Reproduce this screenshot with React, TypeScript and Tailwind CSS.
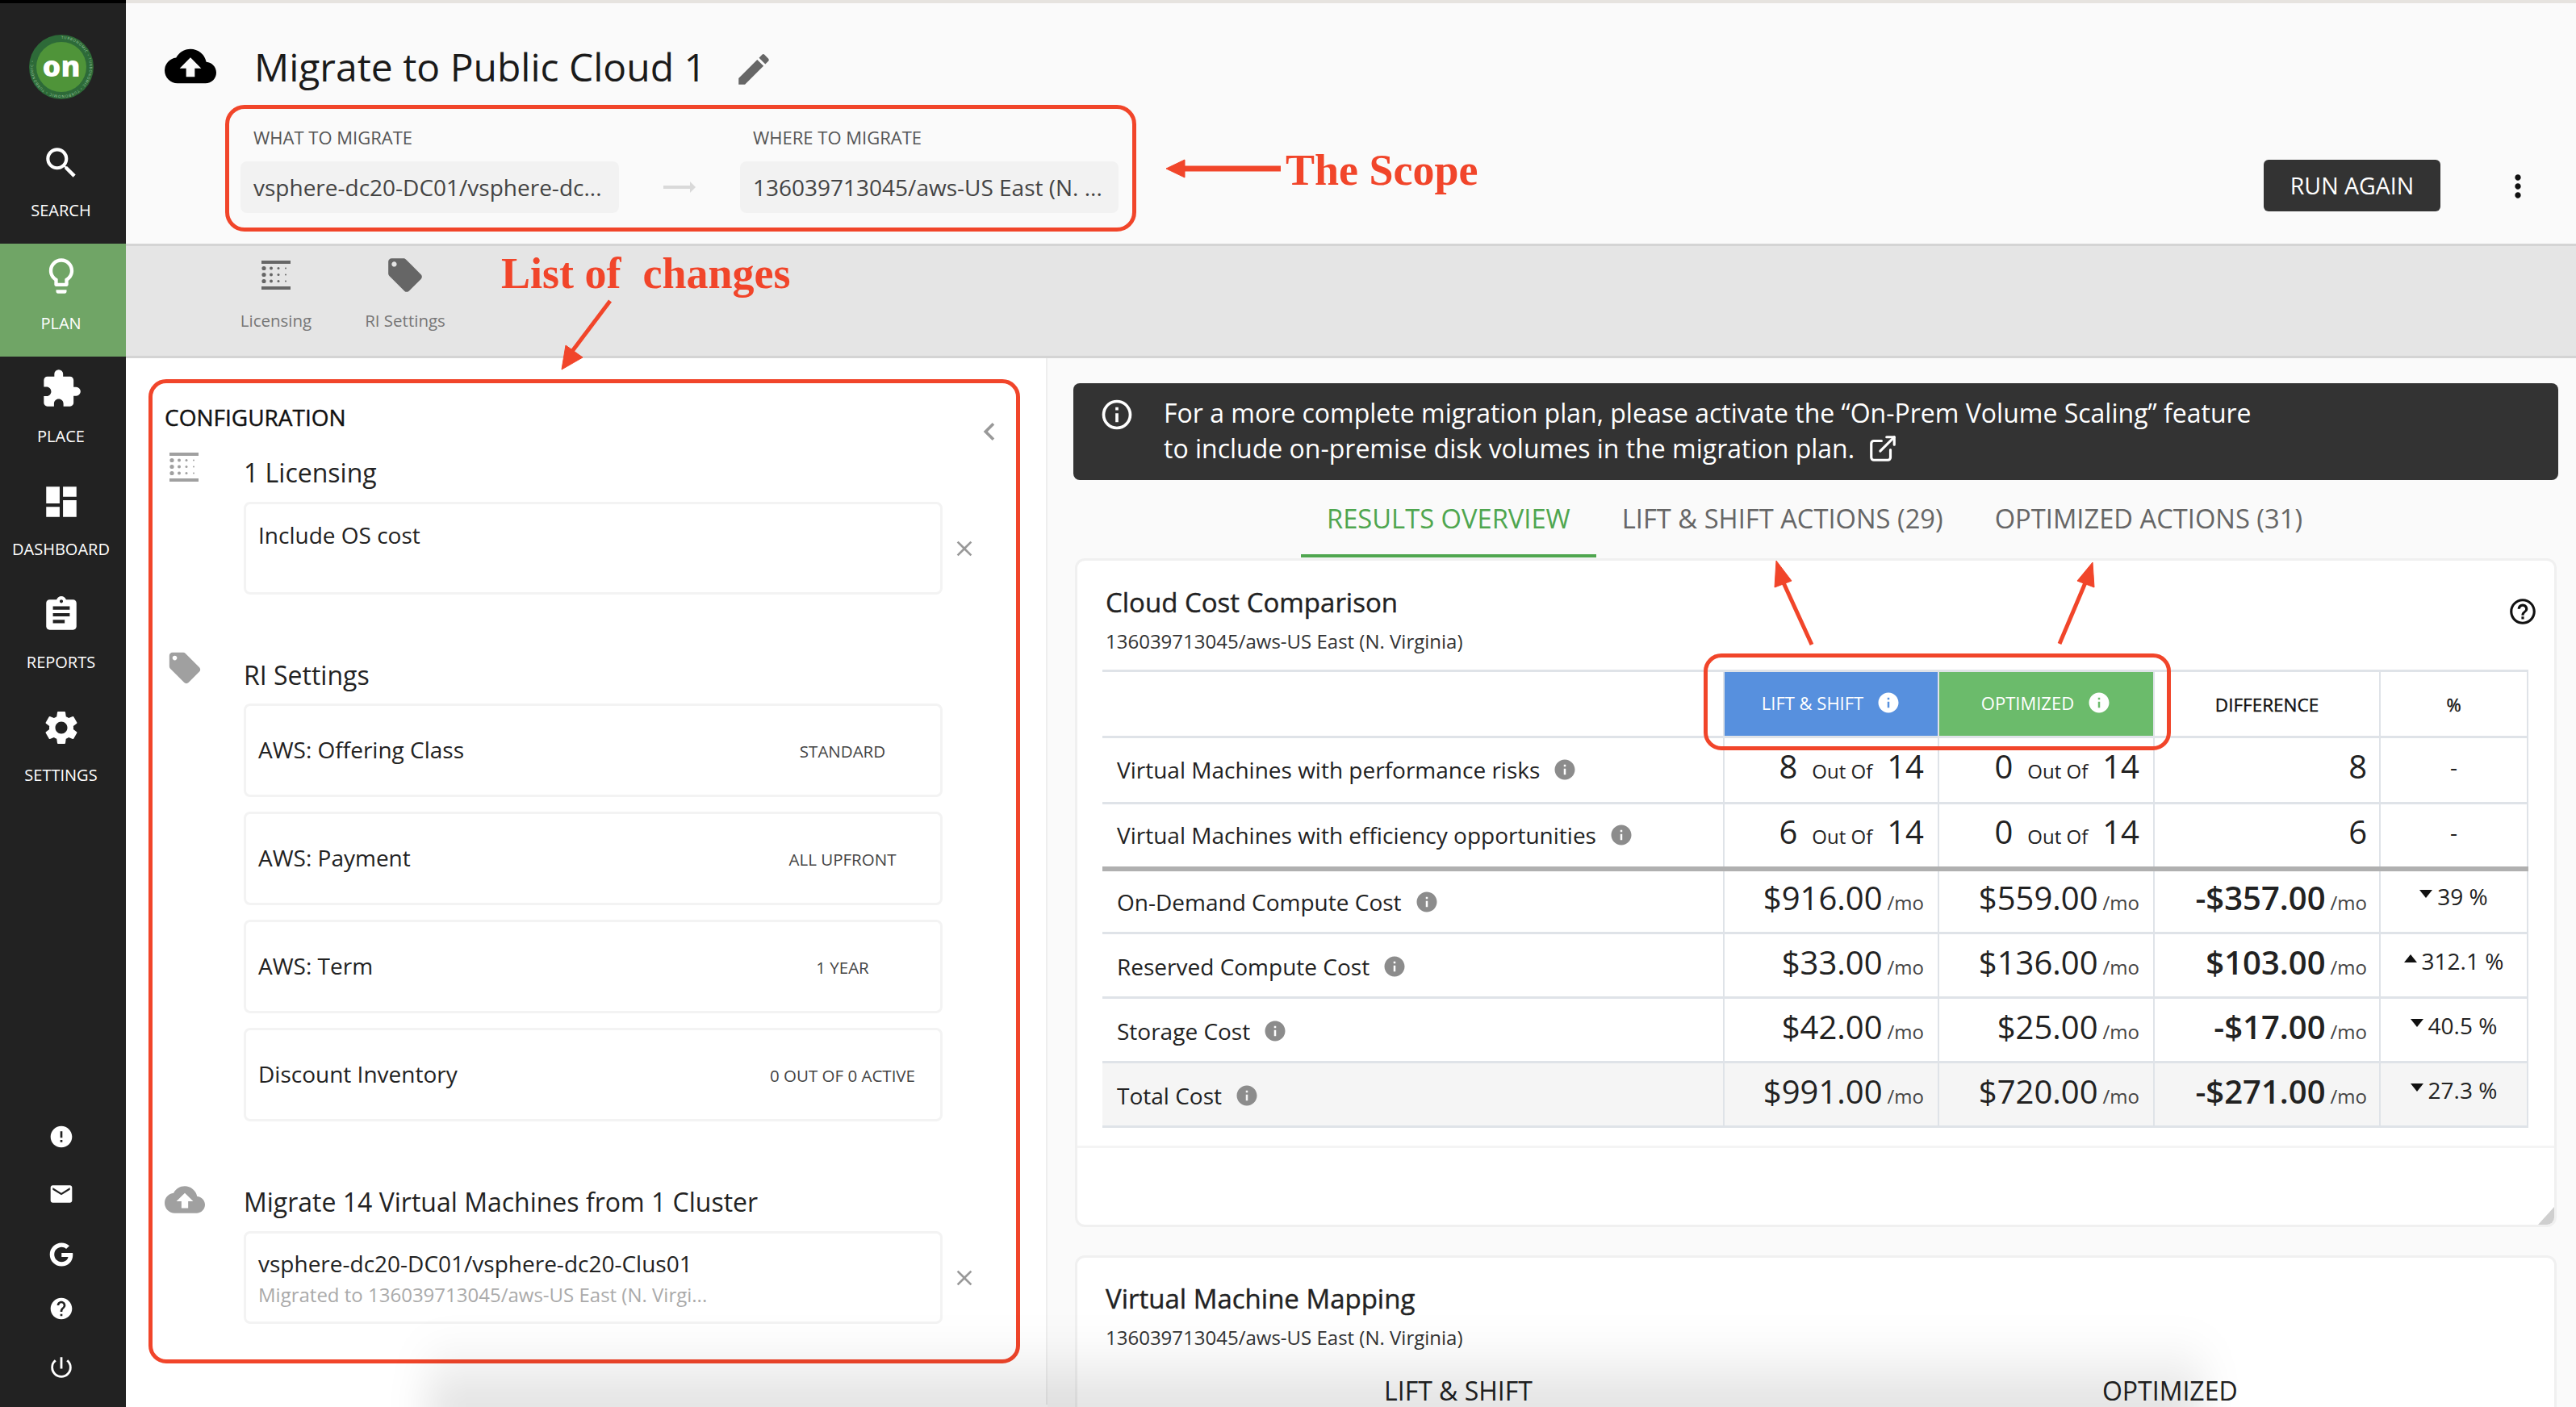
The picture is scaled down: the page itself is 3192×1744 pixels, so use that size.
import type { ReactNode } from "react";
import {
  MdAssignment,
  MdChevronLeft,
  MdClose,
  MdCloudUpload,
  MdDashboard,
  MdEdit,
  MdEmail,
  MdError,
  MdExtension,
  MdHelp,
  MdHelpOutline,
  MdInfo,
  MdInfoOutline,
  MdLightbulbOutline,
  MdLocalOffer,
  MdMoreVert,
  MdPowerSettingsNew,
  MdSearch,
  MdSettings,
} from "react-icons/md";
import { FaGoogle } from "react-icons/fa";
import { FiExternalLink } from "react-icons/fi";

const navItems = [
  { label: "SEARCH", icon: <MdSearch className="text-[50px]" /> },
  { label: "PLAN", icon: <MdLightbulbOutline className="text-[52px]" />, active: true },
  { label: "PLACE", icon: <MdExtension className="text-[52px]" /> },
  { label: "DASHBOARD", icon: <MdDashboard className="text-[50px]" /> },
  { label: "REPORTS", icon: <MdAssignment className="text-[50px]" /> },
  { label: "SETTINGS", icon: <MdSettings className="text-[50px]" /> },
];

const costRows = [
  ["On-Demand Compute Cost", "$916.00", "$559.00", "-$357.00", "39 %", "down"],
  ["Reserved Compute Cost", "$33.00", "$136.00", "$103.00", "312.1 %", "up"],
  ["Storage Cost", "$42.00", "$25.00", "-$17.00", "40.5 %", "down"],
  ["Total Cost", "$991.00", "$720.00", "-$271.00", "27.3 %", "down"],
];

const riRows = [
  ["AWS: Offering Class", "STANDARD"],
  ["AWS: Payment", "ALL UPFRONT"],
  ["AWS: Term", "1 YEAR"],
  ["Discount Inventory", "0 OUT OF 0 ACTIVE"],
];

const LicensingIcon = ({ className }: { className: string }) => (
  <svg viewBox="0 0 36 36" className={className} fill="currentColor">
    <rect x="0" y="0" width="36" height="4" />
    <rect x="0" y="32" width="36" height="4" />
    {[10, 18, 26].map((y) => (
      <g key={y}>
        <circle cx="3" cy={y - 0.5} r="2.6" />
        <circle cx="12" cy={y - 0.5} r="2" />
        <circle cx="21" cy={y - 0.5} r="1.5" />
        <circle cx="30" cy={y - 0.5} r="1" />
      </g>
    ))}
  </svg>
);

const Logo = () => (
  <svg viewBox="0 0 80 80" className="h-[80px] w-[80px]">
    <circle cx="40" cy="40" r="40" fill="#2d6a38" />
    <circle cx="40" cy="40" r="31" fill="#4f9439" />
    <defs>
      <path id="ring" d="M40 5a35 35 0 1 1-0.01 0" />
    </defs>
    <text fontSize="4.4" fill="#9fc9a2" fontFamily="'Open Sans', sans-serif" letterSpacing="0.8">
      <textPath href="#ring">TURBONOMIC • TURBONOMIC • TURBONOMIC • TURBONOMIC •</textPath>
    </text>
    <text x="40" y="52" textAnchor="middle" fontSize="36" fontWeight="800" fill="#fff" fontFamily="'Open Sans', sans-serif">
      on
    </text>
  </svg>
);

const Sidebar = () => (
  <div className="flex h-[1740px] w-[156px] shrink-0 flex-col bg-[#222222] text-white">
    <div className="flex h-[158px] items-center justify-center pr-[4px]">
      <Logo />
    </div>
    {navItems.map((item) => (
      <div
        key={item.label}
        className={`flex h-[140px] flex-col items-center pr-[5px] pt-[12px] ${item.active ? "bg-[#70a566]" : ""}`}
      >
        <div className="flex h-[56px] items-center">{item.icon}</div>
        <div className="mt-[19px] text-[20px] leading-[24px]">{item.label}</div>
      </div>
    ))}
    <div className="mt-auto flex flex-col items-center pb-[32px] pr-[4px]">
      <MdError className="text-[32px]" />
      <MdEmail className="mt-[39px] text-[32px]" />
      <FaGoogle className="mt-[44px] text-[30px]" />
      <MdHelp className="mt-[36px] text-[32px]" />
      <MdPowerSettingsNew className="mt-[40px] text-[34px]" />
    </div>
  </div>
);

const ScopeField = ({ label, value }: { label: string; value: string }) => (
  <div className="w-[469px]">
    <div className="pl-[16px] text-[22px] leading-[24px] text-[#555555]">{label}</div>
    <div className="mt-[18px] flex h-[64px] items-center rounded-[8px] bg-[#f2f2f2] px-[16px] text-[28px] whitespace-nowrap text-[#444444]">
      {value}
    </div>
  </div>
);

const Header = () => (
  <div className="h-[301px] border-b-[3px] border-[#d4d4d4] bg-[#fafafa] pl-[48px] pr-[50px] pt-[48px]">
    <div className="flex h-[60px] items-center">
      <MdCloudUpload className="text-[64px] text-black" />
      <div className="ml-[47px] mt-[2px] text-[48px] leading-[60px] text-[#1a1a1a]">Migrate to Public Cloud 1</div>
      <MdEdit className="ml-[34px] mt-[8px] text-[50px] text-[#666666]" />
    </div>
    <div className="mt-[46px] flex items-end">
      <div className="ml-[94px] flex items-end">
        <ScopeField label="WHAT TO MIGRATE" value="vsphere-dc20-DC01/vsphere-dc..." />
        <div className="flex h-[64px] w-[150px] items-center justify-center text-[#d9d9d9]">
          <svg viewBox="0 0 40 16" className="h-[16px] w-[40px]" fill="currentColor">
            <rect x="0" y="6" width="34" height="4" />
            <path d="M33 1 40 8l-7 7z" />
          </svg>
        </div>
        <ScopeField label="WHERE TO MIGRATE" value="136039713045/aws-US East (N. ..." />
      </div>
      <div className="ml-auto flex items-center">
        <button className="mb-[2px] h-[64px] w-[219px] rounded-[6px] bg-[#333333] text-[28.5px] text-white">RUN AGAIN</button>
        <MdMoreVert className="ml-[74px] text-[44px] text-[#111111]" />
      </div>
    </div>
  </div>
);

const Toolbar = () => (
  <div className="flex h-[139px] border-b-[3px] border-[#d4d4d4] bg-[#e5e5e5] pl-[136px] pt-[12px] text-[#666666]">
    <div className="flex w-[100px] flex-col items-center">
      <div className="flex h-[48px] items-center">
        <LicensingIcon className="h-[36px] w-[36px]" />
      </div>
      <div className="mt-[17px] text-[20.5px] leading-[30px] text-[#777777]">Licensing</div>
    </div>
    <div className="ml-[60px] flex w-[100px] flex-col items-center">
      <div className="flex h-[48px] items-center">
        <MdLocalOffer className="text-[50px]" />
      </div>
      <div className="mt-[17px] whitespace-nowrap text-[20.5px] leading-[30px] text-[#777777]">RI Settings</div>
    </div>
  </div>
);

const SectionHead = ({ icon, title }: { icon: ReactNode; title: string }) => (
  <div className="flex h-[44px] items-start">
    <div className="flex w-[98px] justify-start text-[#a0a0a0]">{icon}</div>
    <div className="text-[32px] leading-[44px] text-[#222222]">{title}</div>
  </div>
);

const ConfigCard = ({ children, height }: { children: ReactNode; height: string }) => (
  <div className={`w-[866px] rounded-[8px] border-[3px] border-[#f3f3f3] bg-white px-[15px] ${height}`}>{children}</div>
);

const ConfigPanel = () => (
  <div className="h-[1297px] w-[1142px] shrink-0 border-r-[2px] border-[#eeeeee] bg-white pl-[48px] pt-[53px]">
    <div className="flex h-[40px] items-start pr-[48px]">
      <div className="text-[28px] leading-[40px] text-[#111111] [-webkit-text-stroke:0.4px_currentColor]">CONFIGURATION</div>
      <MdChevronLeft className="ml-auto mt-[16px] text-[44px] text-[#999999]" />
    </div>

    <div className="mt-[27px]">
      <SectionHead icon={<LicensingIcon className="ml-[6px] mt-[-3px] h-[36px] w-[36px]" />} title="1 Licensing" />
      <div className="ml-[98px] mt-[14px] flex items-center">
        <ConfigCard height="h-[115px]">
          <div className="pt-[20px] text-[28px] leading-[36px] text-[#222222]">Include OS cost</div>
        </ConfigCard>
        <MdClose className="ml-[11px] text-[32px] text-[#999999]" />
      </div>
    </div>

    <div className="mt-[78px]">
      <SectionHead icon={<MdLocalOffer className="ml-[2px] mt-[-10px] text-[46px]" />} title="RI Settings" />
      <div className="ml-[98px] mt-[13px] flex flex-col gap-[18px]">
        {riRows.map(([name, value]) => (
          <ConfigCard key={name} height="h-[116px]">
            <div className="flex h-full items-center pb-[2px]">
              <div className="text-[28px] text-[#222222]">{name}</div>
              <div className="ml-auto flex w-[212px] justify-center whitespace-nowrap pt-[4px] text-[20.5px] text-[#444444]">{value}</div>
            </div>
          </ConfigCard>
        ))}
      </div>
    </div>

    <div className="mt-[78px]">
      <SectionHead icon={<MdCloudUpload className="mt-[-6px] text-[50px]" />} title="Migrate 14 Virtual Machines from 1 Cluster" />
      <div className="ml-[98px] mt-[14px] flex items-center">
        <ConfigCard height="h-[115px]">
          <div className="pt-[19px] text-[28px] leading-[36px] text-[#222222]">vsphere-dc20-DC01/vsphere-dc20-Clus01</div>
          <div className="mt-[5px] text-[24px] leading-[32px] text-[#aaaaaa]">Migrated to 136039713045/aws-US East (N. Virgi...</div>
        </ConfigCard>
        <MdClose className="ml-[11px] text-[32px] text-[#999999]" />
      </div>
    </div>
  </div>
);

const InfoDot = () => <MdInfo className="ml-[16px] inline-block align-[-4px] text-[30px] text-[#8c8c8c]" />;

const OutOf = ({ n }: { n: string }) => (
  <>
    <span className="text-[40px]">{n}</span>
    <span className="mx-[18px] text-[24px]">Out Of</span>
    <span className="text-[40px]">14</span>
  </>
);

const Price = ({ value, bold }: { value: string; bold?: boolean }) => (
  <>
    <span className={`text-[40px] ${bold ? "font-semibold" : ""}`}>{value}</span>
    <span className="ml-[6px] text-[24px] text-[#444444]">/mo</span>
  </>
);

const Caret = ({ dir }: { dir: string }) => (
  <svg viewBox="0 0 16 10" className="mr-[6px] mb-[6px] h-[10px] w-[16px]" fill="#111111">
    <path d={dir === "up" ? "M8 0 16 10H0z" : "M0 0h16L8 10z"} />
  </svg>
);

const CostTable = () => (
  <table className="w-[1766px] table-fixed border-collapse text-[#222222]">
    <colgroup>
      <col className="w-[770px]" />
      <col className="w-[266px]" />
      <col className="w-[267px]" />
      <col className="w-[280px]" />
      <col className="w-[183px]" />
    </colgroup>
    <tbody>
      <tr className="h-[82px] border-y-[3px] border-[#dfe3e8]">
        <td />
        <td className="border-x-[2px] border-[#dfe3e8] bg-[#5790de] pb-[2px] text-center text-[22px] text-white">
          LIFT & SHIFT
          <MdInfo className="ml-[16px] inline-block align-[-6px] text-[30px]" />
        </td>
        <td className="border-x-[2px] border-[#dfe3e8] bg-[#6bbb6b] pb-[2px] text-center text-[22px] text-white">
          OPTIMIZED
          <MdInfo className="ml-[16px] inline-block align-[-6px] text-[30px]" />
        </td>
        <td className="border-x-[2px] border-[#dfe3e8] pt-[2px] text-center text-[22.5px] text-[#111111] [-webkit-text-stroke:0.4px_currentColor]">
          DIFFERENCE
        </td>
        <td className="border-x-[2px] border-[#dfe3e8] pt-[2px] text-center text-[22px] text-[#111111] [-webkit-text-stroke:0.4px_currentColor]">
          %
        </td>
      </tr>
      <tr className="h-[82px] border-b-[3px] border-[#dfe3e8]">
        <td className="pb-[2px] pl-[18px] text-[28px]">
          Virtual Machines with performance risks
          <InfoDot />
        </td>
        <td className="border-x-[2px] border-[#dfe3e8] pb-[10px] pr-[17px] text-right">
          <OutOf n="8" />
        </td>
        <td className="border-x-[2px] border-[#dfe3e8] pb-[10px] pr-[17px] text-right">
          <OutOf n="0" />
        </td>
        <td className="border-x-[2px] border-[#dfe3e8] pb-[10px] pr-[15px] text-right text-[40px]">8</td>
        <td className="border-x-[2px] border-[#dfe3e8] pb-[10px] text-center text-[28px]">-</td>
      </tr>
      <tr className="h-[81px] border-b-[6px] border-[#b0b0b0]">
        <td className="pl-[18px] text-[28px]">
          Virtual Machines with efficiency opportunities
          <InfoDot />
        </td>
        <td className="border-x-[2px] border-[#dfe3e8] pb-[8px] pr-[17px] text-right">
          <OutOf n="6" />
        </td>
        <td className="border-x-[2px] border-[#dfe3e8] pb-[8px] pr-[17px] text-right">
          <OutOf n="0" />
        </td>
        <td className="border-x-[2px] border-[#dfe3e8] pb-[8px] pr-[15px] text-right text-[40px]">6</td>
        <td className="border-x-[2px] border-[#dfe3e8] pb-[8px] text-center text-[28px]">-</td>
      </tr>
      {costRows.map(([name, a, b, diff, pct, dir]) => (
        <tr key={name} className={`h-[80px] border-b-[3px] border-[#dfe3e8] ${name === "Total Cost" ? "bg-[#f5f5f5]" : ""}`}>
          <td className="pl-[18px] pt-[2px] text-[28px]">
            {name}
            <InfoDot />
          </td>
          <td className="border-x-[2px] border-[#dfe3e8] pb-[8px] pr-[17px] text-right">
            <Price value={a} />
          </td>
          <td className="border-x-[2px] border-[#dfe3e8] pb-[8px] pr-[17px] text-right">
            <Price value={b} />
          </td>
          <td className="border-x-[2px] border-[#dfe3e8] pb-[8px] pr-[15px] text-right">
            <Price value={diff} bold />
          </td>
          <td className="border-x-[2px] border-[#dfe3e8] pb-[12px]">
            <div className="flex items-center justify-center text-[28px]">
              <Caret dir={dir} />
              {pct}
            </div>
          </td>
        </tr>
      ))}
    </tbody>
  </table>
);

const ResultsPanel = () => (
  <div className="min-w-0 flex-1 bg-[#fafafa] pl-[32px] pr-[22px] pt-[31px]">
    <div className="flex h-[120px] rounded-[8px] bg-[#333333] pl-[32px] pt-[15px] text-white">
      <MdInfoOutline className="mt-[2px] text-[44px]" />
      <div className="ml-[36px] text-[32px] leading-[44px]">
        <div>For a more complete migration plan, please activate the “On-Prem Volume Scaling” feature</div>
        <div className="flex items-center">
          to include on-premise disk volumes in the migration plan.
          <FiExternalLink className="ml-[16px] text-[38px]" />
        </div>
      </div>
    </div>

    <div className="flex h-[96px] pl-[282px] text-[32.7px] text-[#666666]">
      <div className="h-full border-b-[4px] border-[#4fa64f] px-[32px] pt-[25px] leading-[46px] text-[#4fa64f]">RESULTS OVERVIEW</div>
      <div className="px-[32px] pt-[25px] leading-[46px]">LIFT & SHIFT ACTIONS (29)</div>
      <div className="px-[32px] pt-[25px] leading-[46px]">OPTIMIZED ACTIONS (31)</div>
    </div>

    <div className="relative ml-[2px] mr-[2px] mt-[1px] h-[829px] overflow-hidden rounded-[12px] border-[3px] border-[#f0f0f0] bg-white pl-[31px] pt-[30px]">
      <div className="pl-[4px] text-[33px] leading-[44px] text-[#222222] [-webkit-text-stroke:0.4px_currentColor]">Cloud Cost Comparison</div>
      <div className="mt-[10px] pl-[4px] text-[24px] leading-[32px] text-[#333333]">136039713045/aws-US East (N. Virginia)</div>
      <div className="mt-[19px]">
        <CostTable />
      </div>
      <div className="ml-[-31px] mt-[22px] border-t-[3px] border-[#f4f4f4]" />
      <MdHelpOutline className="absolute right-[20px] top-[44px] text-[38px] text-[#111111]" />
      <div className="absolute bottom-0 right-0 h-0 w-0 border-b-[22px] border-l-[20px] border-b-[#cfcfcf] border-l-transparent" />
    </div>

    <div className="ml-[2px] mr-[2px] mt-[35px] h-[240px] rounded-t-[12px] border-x-[3px] border-t-[3px] border-[#f0f0f0] bg-white pl-[35px] pt-[29px]">
      <div className="text-[33px] leading-[44px] text-[#222222] [-webkit-text-stroke:0.4px_currentColor]">Virtual Machine Mapping</div>
      <div className="mt-[10px] text-[24px] leading-[32px] text-[#333333]">136039713045/aws-US East (N. Virginia)</div>
      <div className="mt-[30px] flex text-[32px] leading-[40px] text-[#222222]">
        <div className="ml-[345px]">LIFT & SHIFT</div>
        <div className="ml-[706px]">OPTIMIZED</div>
      </div>
    </div>
  </div>
);

const Arrows = () => (
  <svg viewBox="0 0 3192 1744" className="pointer-events-none absolute inset-0 h-[1744px] w-[3192px]">
    <g stroke="#f1452a" strokeWidth="5" fill="#f1452a">
      <line x1="1587" y1="209" x2="1465" y2="209" strokeWidth="7" />
      <path d="M1445 209 1468 198v22z" strokeWidth="1" />
      <line x1="756" y1="373" x2="707" y2="438" />
      <path d="M696 458 701 428 722 443z" strokeWidth="1" />
      <line x1="2245" y1="799" x2="2208" y2="718" />
      <path d="M2201 695 2220 720 2199 728z" strokeWidth="1" />
      <line x1="2552" y1="798" x2="2585" y2="720" />
      <path d="M2593 697 2595 728 2574 720z" strokeWidth="1" />
    </g>
  </svg>
);

const Annotations = () => (
  <>
    <div className="pointer-events-none absolute left-[279px] top-[130px] h-[157px] w-[1129px] rounded-[24px] border-[5px] border-[#f1452a]" />
    <div className="pointer-events-none absolute left-[184px] top-[470px] h-[1220px] w-[1080px] rounded-[22px] border-[5px] border-[#f1452a]" />
    <div className="pointer-events-none absolute left-[2111px] top-[810px] h-[120px] w-[579px] rounded-[22px] border-[5px] border-[#f1452a]" />
    <div className="absolute left-[1593px] top-[176px] text-[54px] font-bold leading-[70px] text-[#f1452a] [font-family:'Liberation_Serif',serif]">
      The Scope
    </div>
    <div className="absolute left-[621px] top-[304px] whitespace-pre text-[54px] font-bold leading-[70px] text-[#f1452a] [font-family:'Liberation_Serif',serif]">
      {"List of  changes"}
    </div>
    <Arrows />
    <div className="pointer-events-none absolute bottom-[-30px] left-[530px] h-[120px] w-[2200px] bg-gradient-to-t from-black/15 to-transparent blur-xl" />
  </>
);

export default function App() {
  return (
    <div className="relative h-[1744px] w-[3192px] overflow-hidden bg-white [font-family:'Open_Sans',sans-serif]">
      <div className="flex h-[4px]">
        <div className="w-[156px] bg-black" />
        <div className="flex-1 bg-[#e6e3df]" />
      </div>
      <div className="flex">
        <Sidebar />
        <div className="min-w-0 flex-1">
          <Header />
          <Toolbar />
          <div className="flex">
            <ConfigPanel />
            <ResultsPanel />
          </div>
        </div>
      </div>
      <Annotations />
    </div>
  );
}
